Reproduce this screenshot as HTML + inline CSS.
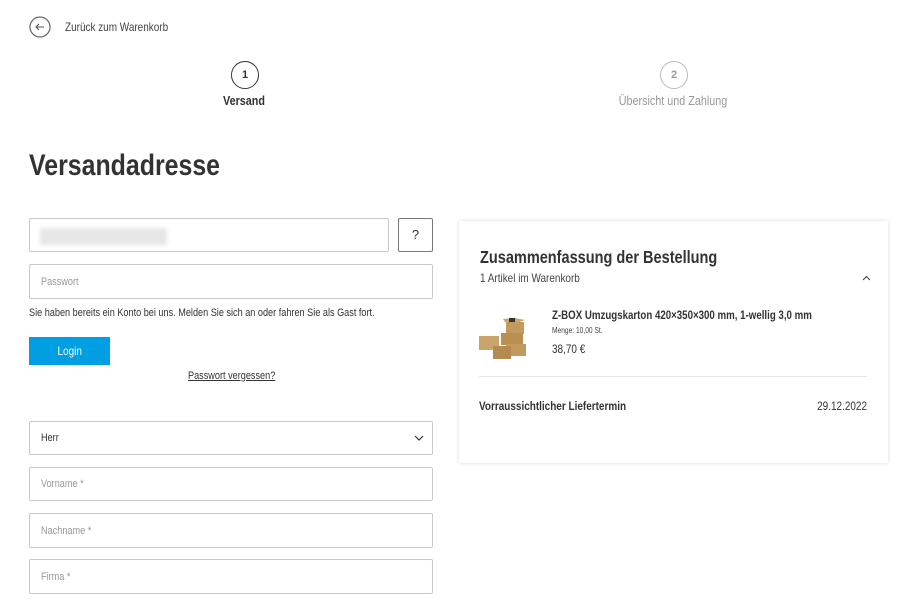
<!DOCTYPE html>
<html><head><meta charset="utf-8"><style>
*{margin:0;padding:0;box-sizing:border-box}
body{width:920px;height:602px;background:#fff;font-family:"Liberation Sans",sans-serif;color:#333;position:relative;overflow:hidden}
.a{position:absolute;white-space:nowrap}
.t{transform:scaleX(.83);transform-origin:left center}
.c{transform:scaleX(.83);transform-origin:center center}
.r{transform:scaleX(.83);transform-origin:right center}
.inp{position:absolute;border:1px solid #c8c8c8;border-radius:2px;background:#fff}
.ph{position:absolute;left:11px;top:50%;transform:translateY(-50%) scaleX(.83);transform-origin:left center;font-size:11px;color:#999}
</style></head><body>
<svg class="a" style="left:29px;top:16px" width="22" height="22" viewBox="0 0 22 22"><circle cx="11" cy="11" r="10" fill="none" stroke="#666" stroke-width="1.2"/><path d="M15 11H7M10 8l-3 3 3 3" fill="none" stroke="#555" stroke-width="1.1"/></svg>
<div class="a t" style="left:65px;top:20px;font-size:12px;color:#444">Zurück zum Warenkorb</div>

<div class="a" style="left:231px;top:61px;width:28px;height:28px;border:1.3px solid #333;border-radius:50%;font-size:11px;font-weight:bold;text-align:center;line-height:26px">1</div>
<div class="a c" style="left:194px;top:93px;width:100px;text-align:center;font-size:13px;font-weight:bold;color:#333">Versand</div>
<div class="a" style="left:660px;top:61px;width:28px;height:28px;border:1.3px solid #bbb;border-radius:50%;font-size:11px;font-weight:bold;color:#999;text-align:center;line-height:26px">2</div>
<div class="a c" style="left:583px;top:93px;width:180px;text-align:center;font-size:13px;color:#999">Übersicht und Zahlung</div>

<div class="a t" style="left:29px;top:149px;font-size:30px;font-weight:bold;color:#333">Versandadresse</div>

<div class="inp" style="left:29px;top:218px;width:360px;height:34px"><div style="position:absolute;left:10px;top:9px;width:127px;height:17px;background:#e6e6e6;filter:blur(2px)"></div></div>
<div class="inp" style="left:398px;top:218px;width:35px;height:34px;border-color:#777;text-align:center;line-height:32px;font-size:13px">?</div>
<div class="inp" style="left:29px;top:264px;width:404px;height:35px"><span class="ph">Passwort</span></div>
<div class="a t" style="left:29px;top:307px;font-size:11px;color:#333">Sie haben bereits ein Konto bei uns. Melden Sie sich an oder fahren Sie als Gast fort.</div>
<div class="a" style="left:29px;top:337px;width:81px;height:28px;background:#009fe3;color:#fff;font-size:12px;text-align:center;line-height:28px"><span style="display:inline-block;transform:scaleX(.83)">Login</span></div>
<div class="a t" style="left:188px;top:370px;font-size:11px;color:#333;text-decoration:underline">Passwort vergessen?</div>

<div class="inp" style="left:29px;top:421px;width:404px;height:34px"><span class="ph" style="color:#333">Herr</span>
<svg style="position:absolute;right:8px;top:13px" width="10" height="7" viewBox="0 0 10 7"><path d="M1 1l4 4 4-4" fill="none" stroke="#333" stroke-width="1.2"/></svg></div>
<div class="inp" style="left:29px;top:467px;width:404px;height:34px"><span class="ph">Vorname *</span></div>
<div class="inp" style="left:29px;top:513px;width:404px;height:35px"><span class="ph">Nachname *</span></div>
<div class="inp" style="left:29px;top:559px;width:404px;height:35px"><span class="ph">Firma *</span></div>

<div class="a" style="left:459px;top:221px;width:429px;height:242px;background:#fff;box-shadow:0 0 4px rgba(0,0,0,.15)"></div>
<div class="a t" style="left:480px;top:247px;font-size:17.5px;font-weight:bold;color:#333">Zusammenfassung der Bestellung</div>
<div class="a t" style="left:480px;top:271px;font-size:12px;color:#444">1 Artikel im Warenkorb</div>
<svg class="a" style="left:862px;top:275px" width="9" height="6" viewBox="0 0 9 6"><path d="M1 5l3.5-3.5L8 5" fill="none" stroke="#444" stroke-width="1.1"/></svg>
<svg class="a" style="left:478px;top:316px" width="56" height="46" viewBox="0 0 56 46">
<path d="M25 3l12-1 10 2-8 3-12-1z" fill="#c9a66b"/>
<rect x="28" y="6" width="18" height="12" fill="#c39a5c"/>
<rect x="23" y="17" width="22" height="12" fill="#b98f52"/>
<rect x="28" y="28" width="20" height="12" fill="#c29a5e"/>
<rect x="1" y="20" width="20" height="14" fill="#caa46a"/>
<rect x="15" y="30" width="18" height="13" fill="#b48a50"/>
<rect x="31" y="2" width="6" height="4" fill="#333"/>
</svg>
<div class="a t" style="left:552px;top:309px;font-size:11.7px;font-weight:bold;color:#333">Z-BOX Umzugskarton 420×350×300 mm, 1-wellig 3,0 mm</div>
<div class="a t" style="left:552px;top:326px;font-size:8px;color:#444">Menge: 10,00 St.</div>
<div class="a t" style="left:552px;top:342px;font-size:12px;color:#333">38,70 €</div>
<div class="a" style="left:479px;top:376px;width:388px;height:1px;background:#e6e6e6"></div>
<div class="a t" style="left:479px;top:399px;font-size:12px;font-weight:bold;color:#333">Vorraussichtlicher Liefertermin</div>
<div class="a r" style="left:747px;top:399px;width:120px;text-align:right;font-size:12px;color:#333">29.12.2022</div>
</body></html>
